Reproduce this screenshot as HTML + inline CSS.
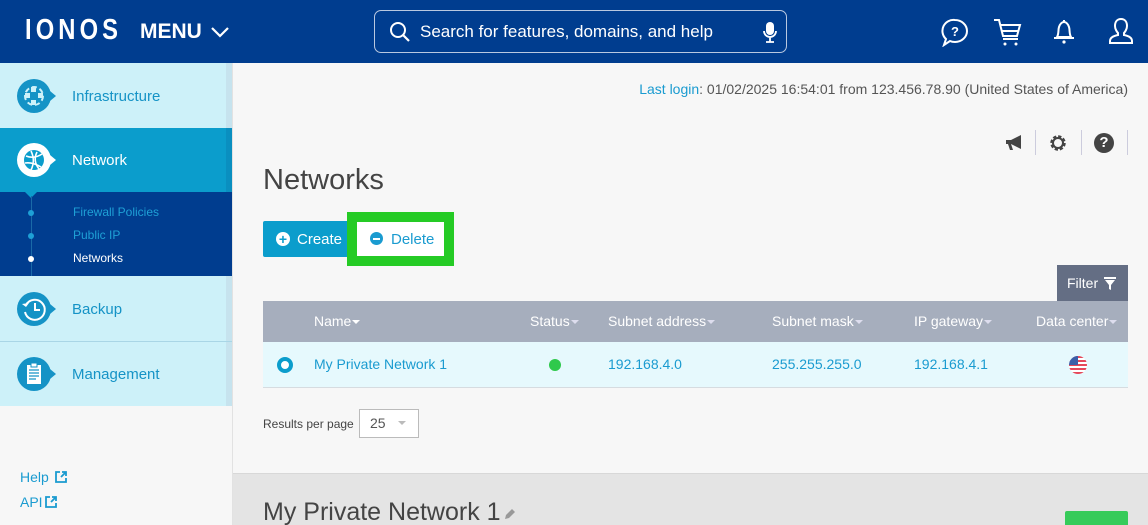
<!DOCTYPE html>
<html><head><meta charset="utf-8"><style>
*{box-sizing:border-box;margin:0;padding:0}
html,body{width:1148px;height:525px;overflow:hidden}
body{background:#f7f7f7;font-family:"Liberation Sans",sans-serif;position:relative;color:#444}
.abs{position:absolute}
#hdr{left:0;top:0;width:1148px;height:63px;background:#003d8f}
.side{left:0;width:226px}
.strip{left:226px;width:6px}
.ico{position:absolute;left:17px;width:34px;height:34px;border-radius:50%}
.ico:after{content:"";position:absolute;right:-5px;top:12px;border-left:6px solid;border-left-color:inherit;border-top:5px solid transparent;border-bottom:5px solid transparent}
.lbl{position:absolute;left:72px;font-size:15px}
.sub{position:absolute;left:73px;font-size:12px;color:#1ea0d6}
.dot{position:absolute;left:28px;width:6px;height:6px;border-radius:50%;background:#1ea0d6}
.hd{position:absolute;top:313px;font-size:14px;color:#fff}
.car{display:inline-block;border-top:4px solid #dde;border-left:4px solid transparent;border-right:4px solid transparent;vertical-align:middle;margin-left:1px}
.cell{position:absolute;top:356px;font-size:14px;color:#1a9bd0}
</style></head><body>
<div id="hdr" class="abs"></div>
<div class="abs" style="left:25px;top:14px;color:#fff;font-size:29px;font-weight:bold;letter-spacing:5px;transform:scaleX(.82);transform-origin:left">IONOS</div>
<div class="abs" style="left:140px;top:20px;color:#fff;font-size:21px;font-weight:bold">MENU</div>
<svg class="abs" style="left:210px;top:26px" width="20" height="12"><path d="M2 2l8 8 8-8" stroke="#fff" stroke-width="2.2" fill="none"/></svg>
<div class="abs" style="left:374px;top:10px;width:413px;height:43px;border:1px solid #b9c8e0;border-radius:7px"></div>
<svg class="abs" style="left:389px;top:21px" width="22" height="22"><circle cx="9" cy="9" r="7" stroke="#fff" stroke-width="2" fill="none"/><path d="M14 14l6 6" stroke="#fff" stroke-width="2.2"/></svg>
<div class="abs" style="left:420px;top:22px;color:#fff;font-size:17px">Search for features, domains, and help</div>
<svg class="abs" style="left:762px;top:21px" width="16" height="24"><rect x="4" y="1" width="8" height="13" rx="4" fill="#fff"/><path d="M2 10a6 6 0 0012 0M8 16v5M4 21h8" stroke="#fff" stroke-width="1.8" fill="none"/></svg>
<svg class="abs" style="left:940px;top:17px" width="30" height="30"><path d="M15 3a12 11 0 110 22c-2 0-4-.5-5-1l-6 4 2-6A11 11 0 0115 3z" stroke="#fff" stroke-width="2" fill="none"/><text x="15" y="19" fill="#fff" font-size="13" font-weight="bold" text-anchor="middle" font-family="Liberation Sans">?</text></svg>
<svg class="abs" style="left:992px;top:17px" width="32" height="30"><path d="M2 3h5l4 16h14l3-11H9" stroke="#fff" stroke-width="2" fill="none"/><path d="M10 14h16M11 22h15" stroke="#fff" stroke-width="2"/><circle cx="13" cy="27" r="1.5" fill="#fff"/><circle cx="24" cy="27" r="1.5" fill="#fff"/></svg>
<svg class="abs" style="left:1050px;top:17px" width="28" height="30"><path d="M14 3v2M7 20c2-3 1-7 2-10 1-3 3-5 5-5s4 2 5 5c1 3 0 7 2 10zM4 21h20" stroke="#fff" stroke-width="2" fill="none"/><circle cx="14" cy="25" r="1.6" fill="#fff"/></svg>
<svg class="abs" style="left:1106px;top:16px" width="30" height="30"><path d="M15 3c4 0 6 3 6 7 0 3-2 6-3 7v2c5 1 8 3 8 6v2H4v-2c0-3 3-5 8-6v-2c-1-1-3-4-3-7 0-4 2-7 6-7z" stroke="#fff" stroke-width="2" fill="none"/></svg>

<div class="abs side" style="top:63px;height:65px;background:#cdf1f9"></div>
<div class="abs strip" style="top:63px;height:65px;background:#c6e3ee"></div>
<div class="ico" style="top:79px;background:#1593c6;border-color:#1593c6"><svg width="34" height="34"><circle cx="17" cy="17" r="9" stroke="#cdf1f9" stroke-width="2" fill="none" stroke-dasharray="5 3"/><rect x="8" y="14" width="5" height="5" fill="#cdf1f9"/><rect x="21" y="14" width="5" height="5" fill="#cdf1f9"/><rect x="14" y="8" width="5" height="5" fill="#cdf1f9"/><rect x="14" y="21" width="5" height="5" fill="#cdf1f9"/></svg></div>
<div class="lbl" style="top:88px;color:#1593c6">Infrastructure</div>
<div class="abs side" style="top:128px;height:64px;background:#0b9dcc"></div>
<div class="abs strip" style="top:128px;height:64px;background:#0a8fc0"></div>
<div class="ico" style="top:143px;background:#fff;border-color:#fff"><svg width="34" height="34"><circle cx="17" cy="17" r="10" fill="#0b9dcc"/><path d="M9 13c5 2 10 2 16-2M8 20c6-1 11 1 16 4M14 8c3 6 3 13 0 19M20 9c-3 6-2 12 2 17" stroke="#fff" stroke-width="1.6" fill="none"/></svg></div>
<div class="lbl" style="top:152px;color:#fff">Network</div>
<div class="abs side" style="top:192px;height:84px;background:#003d8f;width:232px"></div>
<div class="abs" style="left:24px;top:191px;border-top:7px solid #0b9dcc;border-left:7px solid transparent;border-right:7px solid transparent"></div>
<div class="abs" style="left:31px;top:196px;width:1px;height:80px;background:#1a6aa8"></div>
<div class="dot" style="top:210px"></div><div class="sub" style="top:205px">Firewall Policies</div>
<div class="dot" style="top:233px"></div><div class="sub" style="top:228px">Public IP</div>
<div class="dot" style="top:256px;background:#fff"></div><div class="sub" style="top:251px;color:#fff">Networks</div>
<div class="abs side" style="top:276px;height:65px;background:#cdf1f9"></div>
<div class="abs strip" style="top:276px;height:130px;background:#c6e3ee"></div>
<div class="abs side" style="top:341px;height:1px;background:#a9d6e6;width:232px"></div>
<div class="abs side" style="top:342px;height:64px;background:#cdf1f9"></div>
<div class="ico" style="top:292px;background:#1593c6;border-color:#1593c6"><svg width="34" height="34"><path d="M9 13a10 10 0 11-1 7" stroke="#fff" stroke-width="2" fill="none"/><path d="M5 12l4 3 3-4" fill="#fff"/><path d="M18 11v7h5" stroke="#fff" stroke-width="2" fill="none"/></svg></div>
<div class="lbl" style="top:301px;color:#1593c6">Backup</div>
<div class="ico" style="top:357px;background:#1593c6;border-color:#1593c6"><svg width="34" height="34"><rect x="10" y="8" width="14" height="19" fill="#fff"/><rect x="14" y="6" width="6" height="4" fill="#fff" stroke="#1593c6"/><path d="M12 13h10M12 16h10M12 19h10M12 22h7" stroke="#1593c6" stroke-width="1.2"/></svg></div>
<div class="lbl" style="top:366px;color:#1593c6">Management</div>
<div class="abs" style="left:232px;top:63px;width:1px;height:462px;background:#e2e2e2"></div>
<div class="abs" style="left:20px;top:469px;font-size:14px;color:#1a9bd0">Help</div>
<svg class="abs" style="left:55px;top:471px" width="12" height="12"><path d="M5 1H1v10h10V7" stroke="#1a9bd0" stroke-width="1.8" fill="none"/><path d="M6 6l5-5M7 1h4v4" stroke="#1a9bd0" stroke-width="1.8" fill="none"/></svg>
<div class="abs" style="left:20px;top:494px;font-size:14px;color:#1a9bd0">API</div>
<svg class="abs" style="left:45px;top:496px" width="12" height="12"><path d="M5 1H1v10h10V7" stroke="#1a9bd0" stroke-width="1.8" fill="none"/><path d="M6 6l5-5M7 1h4v4" stroke="#1a9bd0" stroke-width="1.8" fill="none"/></svg>

<div class="abs" style="right:20px;top:81px;font-size:14px;color:#555"><span style="color:#1a9bd0">Last login</span>: 01/02/2025 16:54:01 from 123.456.78.90 (United States of America)</div>
<svg class="abs" style="left:1003px;top:133px" width="22" height="20"><path d="M3 7h5l10-5v14L8 11H3z" fill="#444"/><path d="M5 11l2 6h3l-2-6" fill="#444"/></svg>
<div class="abs" style="left:1035px;top:130px;width:1px;height:25px;background:#ccd"></div>
<svg class="abs" style="left:1047px;top:132px" width="22" height="22"><circle cx="11" cy="11" r="6" stroke="#444" stroke-width="3.5" fill="none" stroke-dasharray="3 1.7"/><circle cx="11" cy="11" r="5" stroke="#444" stroke-width="2" fill="none"/></svg>
<div class="abs" style="left:1081px;top:130px;width:1px;height:25px;background:#ccd"></div>
<div class="abs" style="left:1094px;top:133px;width:20px;height:20px;border-radius:50%;background:#444;color:#fff;font-size:15px;font-weight:bold;text-align:center;line-height:20px">?</div>
<div class="abs" style="left:1127px;top:130px;width:1px;height:25px;background:#ccd"></div>
<div class="abs" style="left:263px;top:164px;font-size:29px;color:#444">Networks</div>
<div class="abs" style="left:263px;top:221px;width:86px;height:36px;background:#0b9dcc;border-radius:2px 0 0 2px"></div>
<div class="abs" style="left:276px;top:232px;width:14px;height:14px;border-radius:50%;background:#fff;color:#0b9dcc;font-size:14px;font-weight:bold;text-align:center;line-height:14px">+</div>
<div class="abs" style="left:297px;top:231px;font-size:15px;color:#fff">Create</div>
<div class="abs" style="left:347px;top:212px;width:107px;height:54px;background:#25cb25"></div>
<div class="abs" style="left:357px;top:222px;width:87px;height:34px;background:#fff"></div>
<div class="abs" style="left:370px;top:232px;width:13px;height:13px;border-radius:50%;background:#1a9bd0"><div style="position:absolute;left:3px;top:5.5px;width:7px;height:2px;background:#fff"></div></div>
<div class="abs" style="left:391px;top:231px;font-size:15px;color:#1a9bd0">Delete</div>
<div class="abs" style="left:1057px;top:265px;width:71px;height:36px;background:#646e84"></div>
<div class="abs" style="left:1067px;top:275px;font-size:14px;color:#fff">Filter</div>
<svg class="abs" style="left:1104px;top:277px" width="12" height="13"><path d="M0 0h12v2H0zM1 3h10L7 8v5l-2-1V8z" fill="#fff"/></svg>
<div class="abs" style="left:263px;top:301px;width:865px;height:41px;background:#a6aebd"></div>
<div class="hd" style="left:314px">Name<span class="car" style="border-top-color:#fff"></span></div>
<div class="hd" style="left:530px">Status<span class="car"></span></div>
<div class="hd" style="left:608px">Subnet address<span class="car"></span></div>
<div class="hd" style="left:772px">Subnet mask<span class="car"></span></div>
<div class="hd" style="left:914px">IP gateway<span class="car"></span></div>
<div class="hd" style="left:1036px">Data center<span class="car"></span></div>
<div class="abs" style="left:263px;top:342px;width:865px;height:46px;background:#e6f9fd;border-bottom:1px solid #d6dce0"></div>
<div class="abs" style="left:277px;top:357px;width:16px;height:16px;border-radius:50%;border:4.5px solid #0b9dcc;background:#fff"></div>
<div class="cell" style="left:314px">My Private Network 1</div>
<div class="abs" style="left:549px;top:359px;width:12px;height:12px;border-radius:50%;background:#2fc94c"></div>
<div class="cell" style="left:608px">192.168.4.0</div>
<div class="cell" style="left:772px">255.255.255.0</div>
<div class="cell" style="left:914px">192.168.4.1</div>
<svg class="abs" style="left:1069px;top:356px" width="18" height="18"><clipPath id="c"><circle cx="9" cy="9" r="9"/></clipPath><g clip-path="url(#c)"><rect width="18" height="18" fill="#fff"/><path d="M0 1h18M0 5h18M0 9h18M0 13h18M0 17h18" stroke="#e5485a" stroke-width="2"/><rect width="9" height="9" fill="#3b5fa8"/></g></svg>
<div class="abs" style="left:263px;top:417px;font-size:12px;color:#444">Results per page</div>
<div class="abs" style="left:359px;top:409px;width:60px;height:29px;border:1px solid #bbb;background:#fff"></div>
<div class="abs" style="left:370px;top:415px;font-size:14px;color:#555">25</div>
<div class="abs" style="left:398px;top:421px;border-top:4px solid #bbb;border-left:4px solid transparent;border-right:4px solid transparent"></div>
<div class="abs" style="left:233px;top:473px;width:915px;height:52px;background:#e4e4e4;border-top:1px solid #d8d8d8"></div>
<div class="abs" style="left:263px;top:498px;font-size:25px;color:#444">My Private Network 1</div>
<svg class="abs" style="left:504px;top:508px" width="12" height="12"><path d="M1 11l1-4 6-6 3 3-6 6z" fill="#999"/></svg>
<div class="abs" style="left:1065px;top:511px;width:63px;height:14px;background:#37cb5a;border-radius:2px 2px 0 0"></div>
</body></html>
